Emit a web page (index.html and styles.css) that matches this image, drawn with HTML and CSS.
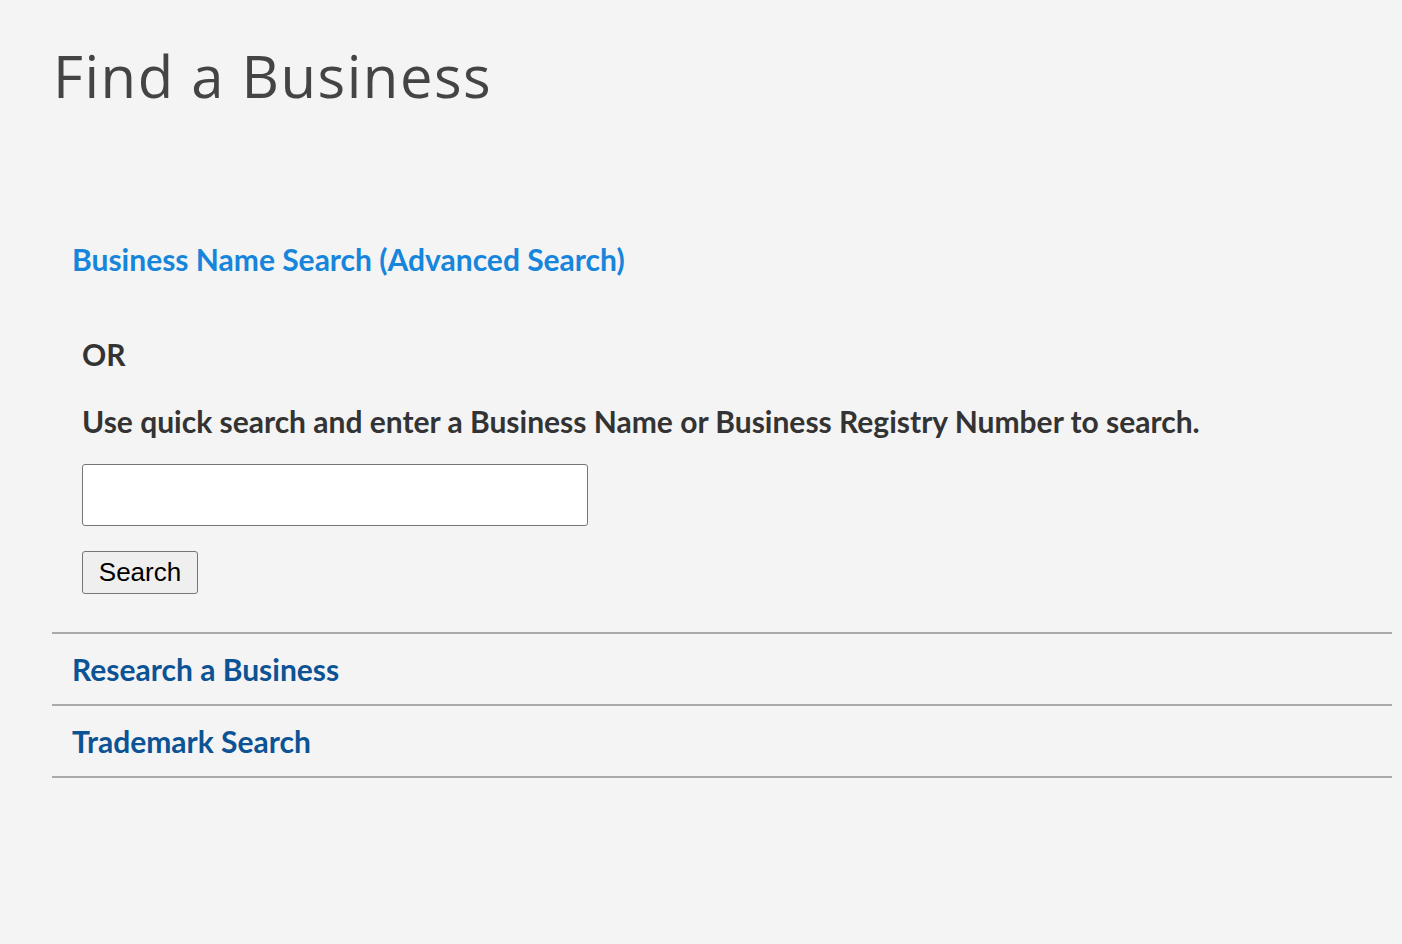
FILE: index.html
```html
<!DOCTYPE html>
<html lang="en">
<head>
<meta charset="utf-8">
<title>Find a Business</title>
<link rel="stylesheet" href="styles.css">
</head>
<body>
<main class="page">
  <h1 class="page-title">Find a Business</h1>
  <section class="search-block">
    <a class="adv-link" href="#">Business Name Search (Advanced Search)</a>
    <div class="quick">
      <p class="or">OR</p>
      <p class="hint">Use quick search and enter a Business Name or Business Registry Number to search.</p>
      <form class="quick-form">
        <input class="quick-input" type="text" aria-label="Business name or number">
        <button class="quick-btn" type="button">Search</button>
      </form>
    </div>
  </section>
  <ul class="nav-list">
    <li class="nav-item"><a href="#">Research a Business</a></li>
    <li class="nav-item"><a href="#">Trademark Search</a></li>
  </ul>
</main>
</body>
</html>
```
FILE: styles.css
```css
html, body {
  margin: 0;
  padding: 0;
  background: #f4f4f4;
}
body {
  font-family: Lato, "Liberation Sans", sans-serif;
  color: #333;
}
.page {
  padding: 36px 10px 0 52px;
}
.page-title {
  margin: 0;
  font-family: "Open Sans", "Liberation Sans", sans-serif;
  font-weight: 400;
  font-size: 58px;
  line-height: 80px;
  letter-spacing: 1.5px;
  color: #444;
  padding-left: 1px;
}
.search-block {
  padding: 125px 0 0 20px;
}
.adv-link {
  display: block;
  font-weight: 700;
  font-size: 30px;
  line-height: 36px;
  color: #1685db;
  text-decoration: none;
}
.quick {
  padding: 59px 0 0 10px;
}
.or {
  margin: 0;
  font-weight: 700;
  font-size: 30px;
  line-height: 36px;
}
.hint {
  margin: 31px 0 0;
  font-weight: 700;
  font-size: 30px;
  line-height: 36px;
}
.quick-form {
  display: flex;
  flex-direction: column;
  align-items: flex-start;
  gap: 25px;
  padding-top: 25px;
}
.quick-input {
  box-sizing: border-box;
  width: 506px;
  height: 62px;
  margin: 0;
  border: 1.5px solid #767676;
  border-radius: 3px;
  background: #fff;
}
.quick-btn {
  box-sizing: border-box;
  width: 116px;
  height: 43px;
  margin: 0;
  padding: 0;
  font-family: "Liberation Sans", Arial, sans-serif;
  font-size: 26px;
  color: #000;
  background: #efefef;
  border: 1.5px solid #767676;
  border-radius: 3px;
}
.nav-list {
  list-style: none;
  margin: 38px 0 0;
  padding: 0;
  border-top: 2px solid #aaa;
}
.nav-item {
  border-bottom: 2px solid #aaa;
  height: 70px;
  display: flex;
  align-items: center;
  padding-left: 20px;
}
.nav-item a {
  font-weight: 700;
  font-size: 30px;
  color: #0b5394;
  text-decoration: none;
}
```
